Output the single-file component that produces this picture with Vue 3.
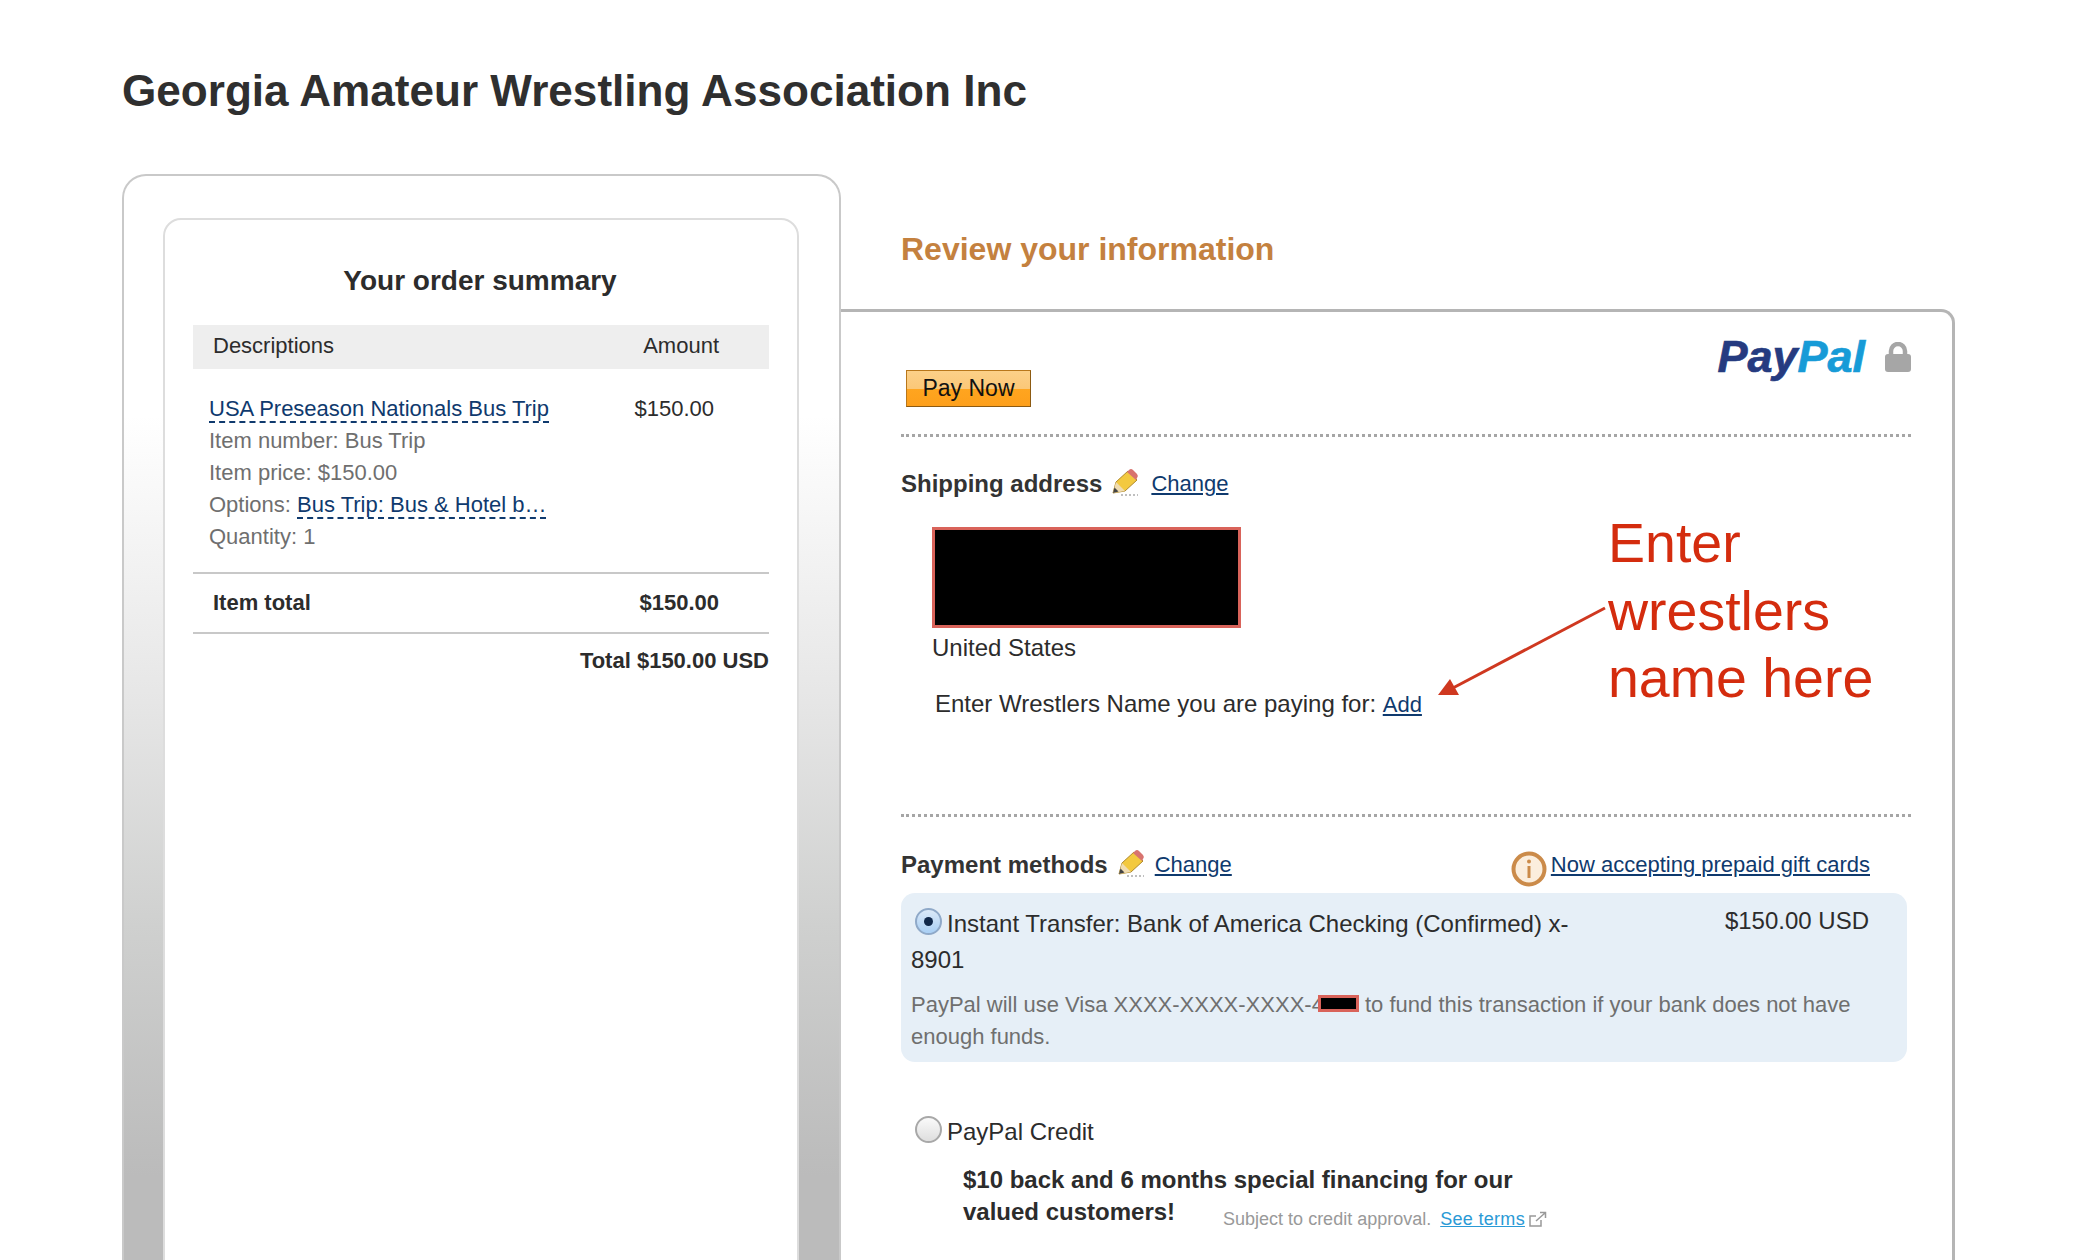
<template>
  <div class="page">
    <h1 class="store">Georgia Amateur Wrestling Association Inc</h1>

    <div class="columns">
      <aside class="cart-shell">
        <section class="cart">
          <h2 class="cart-title">Your order summary</h2>
          <div class="cart-head">
            <span>Descriptions</span>
            <span>Amount</span>
          </div>
          <div class="item">
            <div class="item-info">
              <a class="dashed">USA Preseason Nationals Bus Trip</a>
              <div v-for="line in itemLines" :key="line">{{ line }}</div>
              <div>Options: <a class="dashed">Bus Trip: Bus &amp; Hotel b…</a></div>
              <div>Quantity: 1</div>
            </div>
            <div class="item-price">$150.00</div>
          </div>
          <div class="item-total">
            <span>Item total</span>
            <span>$150.00</span>
          </div>
          <div class="grand-total">Total $150.00 USD</div>
        </section>
      </aside>

      <main class="review">
        <h2 class="review-title">Review your information</h2>
        <div class="panel">
          <div class="brand">
            <span class="logo"><span class="pay">Pay</span><span class="pal">Pal</span></span>
            <svg class="lock" viewBox="0 0 26 30" width="26" height="30">
              <path d="M6 14V9a7 7 0 0 1 14 0v5" fill="none" stroke="#a6a6a6" stroke-width="4.500" />
              <rect x="0" y="12" width="26" height="18" rx="3" fill="#a6a6a6" />
            </svg>
          </div>

          <button type="button" class="pay-btn">Pay Now</button>

          <section class="shipping">
            <div class="section-head">
              <strong>Shipping address</strong>
              <svg class="pencil" viewBox="0 0 28 28" width="28" height="28">
                <path d="M2 25 5 14 17 3l9 9L14 23z" fill="#f3c93f" stroke="#b08a2c" stroke-width="1" />
                <path d="M16 4l2-2a3 3 0 0 1 4 0l4 4a3 3 0 0 1 0 4l-1 2z" fill="#d8736f" />
                <path d="M2 25 5 14l9 9z" fill="#f0dcb0" />
                <path d="M2 25l1.500-5.500 4 4z" fill="#444" />
                <path d="M10 27h17" stroke="#aaa" stroke-width="1.500" stroke-dasharray="2 2" />
              </svg>
              <a class="link change">Change</a>
            </div>
            <div class="address-block"></div>
            <div class="country">United States</div>
            <div class="wrestler">Enter Wrestlers Name you are paying for: <a class="link">Add</a></div>

            <div class="note">Enter<br />wrestlers<br />name here</div>
            <svg class="note-arrow" viewBox="0 0 170 92" width="170" height="92">
              <path d="M168 3 14 84" stroke="#cf3820" stroke-width="3" fill="none" />
              <path d="M1 90 13 74l9 16z" fill="#cf3820" />
            </svg>
          </section>

          <section class="methods">
            <div class="methods-head">
              <div class="section-head">
                <strong>Payment methods</strong>
                <svg class="pencil" viewBox="0 0 28 28" width="28" height="28">
                  <path d="M2 25 5 14 17 3l9 9L14 23z" fill="#f3c93f" stroke="#b08a2c" stroke-width="1" />
                  <path d="M16 4l2-2a3 3 0 0 1 4 0l4 4a3 3 0 0 1 0 4l-1 2z" fill="#d8736f" />
                  <path d="M2 25 5 14l9 9z" fill="#f0dcb0" />
                  <path d="M2 25l1.500-5.500 4 4z" fill="#444" />
                  <path d="M10 27h17" stroke="#aaa" stroke-width="1.500" stroke-dasharray="2 2" />
                </svg>
                <a class="link">Change</a>
              </div>
              <div class="gift">
                <svg class="info" viewBox="0 0 36 36" width="36" height="36">
                  <circle cx="18" cy="18" r="15.500" fill="#fbeedd" stroke="#cb8b4a" stroke-width="4" />
                  <circle cx="18" cy="10.500" r="2" fill="#cb8b4a" />
                  <rect x="16.500" y="15" width="3" height="12" fill="#cb8b4a" />
                </svg>
                <a class="link">Now accepting prepaid gift cards</a>
              </div>
            </div>

            <div class="method">
              <div class="method-top">
                <div class="method-name">
                  <span class="radio radio-on"></span>Instant Transfer: Bank of America Checking (Confirmed) x-<br />8901
                </div>
                <div class="method-amount">$150.00 USD</div>
              </div>
              <p class="backup">PayPal will use Visa XXXX-XXXX-XXXX-4<span class="card-mask"></span> to fund this transaction if your bank does not have enough funds.</p>
            </div>

            <div class="credit">
              <div class="credit-name"><span class="radio"></span>PayPal Credit</div>
              <div class="offer">
                <strong>$10 back and 6 months special financing for our</strong>
                <div class="offer-row">
                  <strong>valued customers!</strong>
                  <span class="terms">Subject to credit approval.
                    <a>See terms</a>
                    <svg viewBox="0 0 18 16" width="18" height="16">
                      <path d="M12 9v6H1V5h6" fill="none" stroke="#999" stroke-width="1.500" />
                      <path d="M7 10l9-8M11 1.500h5.500V7" fill="none" stroke="#999" stroke-width="1.500" />
                    </svg>
                  </span>
                </div>
              </div>
            </div>
          </section>
        </div>
      </main>
    </div>
  </div>
</template>

<script setup>
const itemLines = ['Item number: Bus Trip', 'Item price: $150.00']
</script>

<style>
html,
body {
  margin: 0;
  background: #fff;
}
</style>

<style scoped>
.page {
  height: 1260px;
  overflow: hidden;
  padding: 0 144px 0 122px;
  box-sizing: border-box;
  font-family: "Liberation Sans", Arial, sans-serif;
  color: #2c2c2c;
  background: #fff;
}

.store {
  margin: 0;
  padding-top: 65px;
  height: 174px;
  box-sizing: border-box;
  font-size: 44.100px;
  line-height: 52px;
  font-weight: 700;
  color: #2f2f2f;
}

.columns {
  display: flex;
  align-items: flex-start;
}

.cart-shell {
  width: 719px;
  height: 1200px;
  flex: none;
  box-sizing: border-box;
  padding: 42px 40px 0 39px;
  border: 2px solid #c9c9c9;
  border-bottom: 0;
  border-radius: 24px 24px 0 0;
  background: linear-gradient(#fff 0, #fff 240px, #e6e6e6 526px, #cfd0cf 750px, #bbb 1000px, #bbb 100%);
}

.cart {
  height: 1100px;
  box-sizing: border-box;
  padding: 0 28px;
  background: #fff;
  border: 2px solid #ddd;
  border-radius: 18px 18px 0 0;
}

.cart-title {
  margin: 0;
  padding: 44px 2px 0 0;
  height: 105px;
  box-sizing: border-box;
  text-align: center;
  font-size: 28px;
  line-height: 34px;
  font-weight: 700;
  color: #2c2c2c;
}

.cart-head {
  display: flex;
  justify-content: space-between;
  height: 44px;
  padding: 0 50px 0 20px;
  background: #eee;
  font-size: 22px;
  line-height: 41px;
}

.item {
  display: flex;
  justify-content: space-between;
  height: 205px;
  box-sizing: border-box;
  padding: 24px 55px 0 16px;
  border-bottom: 2px solid #c8c8c8;
  font-size: 22px;
  line-height: 32px;
}

.item-info {
  color: #6f6f6f;
}

.item-price {
  color: #2c2c2c;
}

.dashed {
  color: #0f3a6e;
  border-bottom: 2px dashed #0f3a6e;
}

.item-total {
  display: flex;
  justify-content: space-between;
  height: 58px;
  padding: 0 50px 0 20px;
  border-bottom: 2px solid #c8c8c8;
  font-size: 22px;
  line-height: 57px;
  font-weight: 700;
}

.grand-total {
  padding-top: 12px;
  text-align: right;
  font-size: 22px;
  line-height: 30px;
  font-weight: 700;
}

.review {
  flex: 1;
  min-width: 0;
}

.review-title {
  margin: 0;
  height: 135px;
  box-sizing: border-box;
  padding: 56px 0 0 60px;
  font-size: 32px;
  line-height: 38px;
  font-weight: 700;
  color: #c4813f;
}

.panel {
  position: relative;
  height: 1000px;
  box-sizing: border-box;
  padding: 58px 41px 0 60px;
  border-top: 3px solid #b5b5b5;
  border-right: 3px solid #b5b5b5;
  border-radius: 0 14px 0 0;
}

.brand {
  position: absolute;
  top: 23px;
  right: 41px;
  display: flex;
  align-items: center;
  gap: 20px;
}

.logo {
  font-size: 45px;
  line-height: 44px;
  font-weight: 700;
  font-style: italic;
  -webkit-text-stroke: 0.7px;
}

.pay {
  color: #253b80;
}

.pal {
  color: #179bd7;
}

.pay-btn {
  display: block;
  width: 125px;
  height: 37px;
  margin-left: 5px;
  padding: 0;
  border: 1px solid #b9771a;
  border-bottom-color: #8c5a12;
  border-right-color: #8c5a12;
  background: linear-gradient(#fcd088 0, #fbc878 50%, #ffa51f 51%, #fd9f1b 100%);
  font-family: inherit;
  font-size: 23px;
  line-height: 35px;
  color: #111;
}

.shipping {
  position: relative;
  height: 380px;
  margin-top: 27px;
  border-top: 3px dotted #a6a6a6;
  box-sizing: border-box;
  padding-top: 29px;
}

.section-head {
  display: flex;
  align-items: center;
  height: 36px;
  font-size: 24px;
  line-height: 36px;
  color: #333;
}

.pencil {
  margin: -4px 10px 0 9px;
  flex: none;
}

.link {
  color: #0f3a6e;
  font-size: 22px;
  text-decoration: underline;
}

.change {
  margin-left: 2px;
}

.address-block {
  width: 303px;
  height: 95px;
  margin: 25px 0 0 31px;
  background: #000;
  border: 3px solid #d9635a;
}

.country {
  margin: 4px 0 0 31px;
  font-size: 24px;
  line-height: 32px;
}

.wrestler {
  margin: 24px 0 0 34px;
  font-size: 24px;
  line-height: 32px;
}

.note {
  position: absolute;
  top: 73px;
  left: 707px;
  font-size: 55.500px;
  line-height: 67.500px;
  color: #d42c0e;
  white-space: nowrap;
}

.note-arrow {
  position: absolute;
  top: 168px;
  left: 536px;
}

.methods {
  border-top: 3px dotted #a6a6a6;
  padding-top: 26px;
}

.methods-head {
  display: flex;
  justify-content: space-between;
  align-items: center;
  height: 44px;
  padding-right: 41px;
}

.gift {
  display: flex;
  align-items: center;
  gap: 4px;
}

.info {
  margin-top: 8px;
  flex: none;
}

.method {
  width: 1006px;
  height: 169px;
  margin-top: 6px;
  padding: 0 10px;
  box-sizing: border-box;
  background: #e6eff7;
  border-radius: 14px;
}

.method-top {
  display: flex;
  justify-content: space-between;
  padding-top: 12px;
}

.method-name {
  padding-top: 1px;
  font-size: 24px;
  line-height: 36px;
}

.method-amount {
  padding-right: 28px;
  font-size: 24px;
  line-height: 32px;
}

.radio {
  display: inline-block;
  width: 23px;
  height: 23px;
  margin: 0 5px 0 4px;
  vertical-align: -3px;
  border: 2px solid #a8a8a8;
  border-radius: 50%;
  background: linear-gradient(#fafafa, #dedede);
}

.radio-on {
  position: relative;
  border-color: #8fa9c8;
  background: linear-gradient(#dbe9f8, #a9cff4);
}

.radio-on::after {
  content: "";
  position: absolute;
  top: 7px;
  left: 7px;
  width: 9px;
  height: 9px;
  border-radius: 50%;
  background: #10284a;
}

.backup {
  margin: 11px 0 0;
  padding-right: 20px;
  font-size: 22px;
  line-height: 32px;
  color: #6f6f6f;
}

.card-mask {
  display: inline-block;
  width: 35px;
  height: 11px;
  margin-left: -6px;
  vertical-align: 0;
  background: #000;
  border: 3px solid #d9635a;
}

.credit {
  margin-top: 52px;
  padding-left: 10px;
}

.credit-name {
  font-size: 24px;
  line-height: 36px;
}

.offer {
  margin: 14px 0 0 52px;
  white-space: nowrap;
  font-size: 24px;
  line-height: 32px;
}

.offer-row {
  display: flex;
  align-items: flex-end;
  gap: 48px;
}

.terms {
  margin-bottom: -3px;
  font-size: 18px;
  line-height: 24px;
  color: #999;
}

.terms a {
  margin-left: 4px;
  color: #2a9ad6;
  text-decoration: underline;
  letter-spacing: 0.3px;
}

.terms svg {
  margin-left: 4px;
  vertical-align: -2px;
}
</style>
